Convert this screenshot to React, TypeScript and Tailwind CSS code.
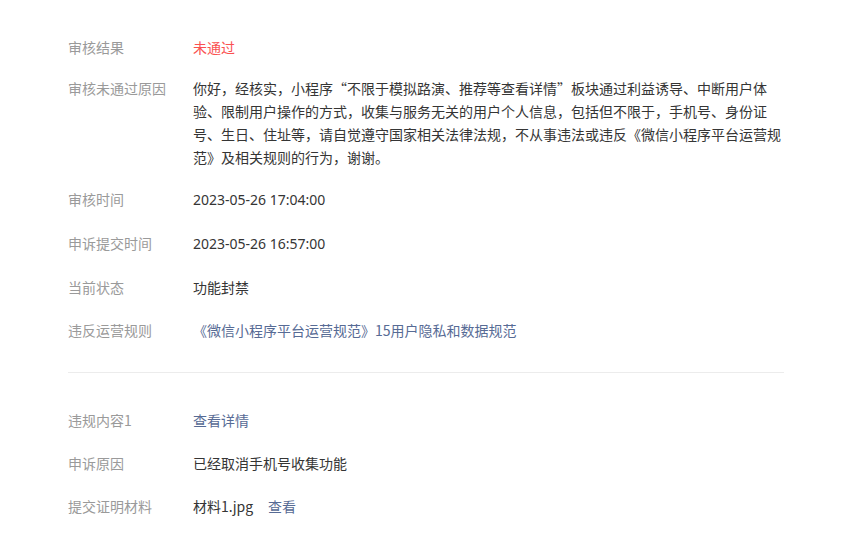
import React from "react"

// 申诉详情
interface Row {
  label: string
  value: React.ReactNode
  multiline?: boolean
}

const font = { fontFamily: '"Noto Sans CJK SC", "Noto Sans", sans-serif' }
const latin = { fontFamily: '"Noto Sans", "Noto Sans CJK SC", sans-serif' }

const Link = ({ children }: { children: React.ReactNode }) => (
  <span className="text-[#576b95] cursor-pointer">{children}</span>
)

const auditRows: Row[] = [
  { label: "审核结果", value: <span className="text-[#fa5151]">未通过</span> },
  {
    label: "审核未通过原因",
    multiline: true,
    value:
      "你好，经核实，小程序“不限于模拟路演、推荐等查看详情”板块通过利益诱导、中断用户体验、限制用户操作的方式，收集与服务无关的用户个人信息，包括但不限于，手机号、身份证号、生日、住址等，请自觉遵守国家相关法律法规，不从事违法或违反《微信小程序平台运营规范》及相关规则的行为，谢谢。",
  },
  { label: "审核时间", value: <span style={latin}>2023-05-26 17:04:00</span> },
  { label: "申诉提交时间", value: <span style={latin}>2023-05-26 16:57:00</span> },
  { label: "当前状态", value: "功能封禁" },
  { label: "违反运营规则", value: <Link>《微信小程序平台运营规范》15用户隐私和数据规范</Link> },
]

const appealRows: Row[] = [
  { label: "违规内容1", value: <Link>查看详情</Link> },
  { label: "申诉原因", value: "已经取消手机号收集功能" },
  {
    label: "提交证明材料",
    value: (
      <span className="flex items-center gap-[15px]">
        <span>材料1.jpg</span>
        <Link>查看</Link>
      </span>
    ),
  },
]

const InfoList = ({ rows }: { rows: Row[] }) => (
  <div className="flex flex-col gap-[17px]">
    {rows.map((row) => (
      <div
        key={row.label}
        className={row.multiline ? "flex text-sm leading-[23px]" : "flex text-sm leading-[26px]"}
      >
        <div className="w-[125px] shrink-0 text-[#9a9a9a]">{row.label}</div>
        <div className="flex-1 text-[#353535]">{row.value}</div>
      </div>
    ))}
  </div>
)

export default function App() {
  return (
    <div className="min-h-[550px] bg-white" style={font}>
      <div className="ml-[68px] w-[716px] pt-[34px]">
        <InfoList rows={auditRows} />
        <div className="mt-[29px] mb-[34px] h-px bg-[#ececec]"></div>
        <InfoList rows={appealRows} />
      </div>
    </div>
  )
}
